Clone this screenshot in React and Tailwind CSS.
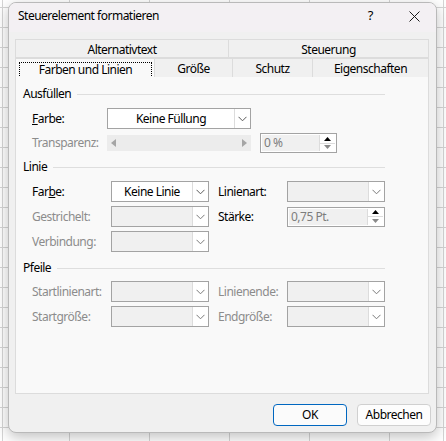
import React from "react";

const F = { fontFamily: '"Noto Sans", "Open Sans", sans-serif' };

function Chevron({ disabled }) {
  return (
    <svg width="9" height="6" viewBox="0 0 9 6" className="block">
      <path d="M0.5 0.8 L4.5 4.8 L8.5 0.8" fill="none" stroke={disabled ? "#7a7a7a" : "#5a5a5a"} strokeWidth="1" />
    </svg>
  );
}

function Combo({ text, disabled, w = "w-[98px]", center }) {
  return (
    <div className={`${w} h-[21px] border border-[#a3a3a3] flex ${disabled ? "bg-[#f0f0f0]" : "bg-white"}`}>
      <div className={`flex-1 flex items-center ${center ? "justify-center" : "pl-1"} text-[12px] text-black`}>{text}</div>
      <div className="w-[16px] h-full border-l border-[#dcdcdc] bg-white flex items-center justify-center">
        <Chevron disabled={disabled} />
      </div>
    </div>
  );
}

function Spin({ text, w }) {
  return (
    <div className={`${w} h-[20px] border border-[#a3a3a3] bg-white p-px flex`}>
      <div className="flex-1 bg-[#f0f0f0] flex items-center pl-[2px] text-[12px] text-[#7d7d7d]">{text}</div>
      <div className="w-[16px] flex flex-col border-l border-[#dcdcdc]">
        <div className="flex-1 flex items-center justify-center border-b border-[#dcdcdc]">
          <svg width="7" height="4" viewBox="0 0 7 4"><path d="M0 4 L3.5 0 L7 4 Z" fill="#000" /></svg>
        </div>
        <div className="flex-1 flex items-center justify-center">
          <svg width="7" height="4" viewBox="0 0 7 4"><path d="M0 0 L3.5 4 L7 0 Z" fill="#8a8a8a" /></svg>
        </div>
      </div>
    </div>
  );
}

function Section({ title, children }) {
  return (
    <div className="flex flex-col">
      <div className="flex items-center gap-[6px] w-[362px] h-[16px]">
        <span className="text-[12px] text-black leading-none">{title}</span>
        <div className="flex-1 h-px bg-[#dedede]" />
      </div>
      {children}
    </div>
  );
}

function Label({ children, disabled, w }) {
  return (
    <div className={`${w} text-[12px] leading-none whitespace-nowrap ${disabled ? "text-[#8c8c8c]" : "text-black"}`}>{children}</div>
  );
}

export default function App() {
  return (
    <div
      className="relative w-[446px] h-[441px] overflow-hidden tracking-[-0.5px] bg-white bg-[linear-gradient(to_right,#d5d5d5_1px,transparent_1px),linear-gradient(to_bottom,#d5d5d5_1px,transparent_1px)] bg-[size:80px_20px] bg-[position:69px_7px]"
      style={F}
    >
      <div className="absolute left-[2px] top-0 w-px h-full bg-[#d5d5d5]" />
      <div className="absolute left-[443px] top-0 w-px h-full bg-[#d5d5d5]" />
      <div className="absolute left-[8px] top-[2px] w-[429px] h-[431px] rounded-[8px] overflow-hidden border border-[#b9b9b9] shadow-[0_4px_14px_rgba(0,0,0,0.25)] bg-[#f0f0f0] flex flex-col">
        {/* title bar */}
        <div className="h-[29px] bg-[#f3f0f3] flex items-center pl-[9px] pb-[3px]">
          <span className="text-[12px] text-black">Steuerelement formatieren</span>
          <span className="ml-auto text-[13px] text-black mr-[36px]">?</span>
          <svg width="11" height="11" viewBox="0 0 11 11" className="mr-[16px]">
            <path d="M0.5 0.5 L10.5 10.5 M10.5 0.5 L0.5 10.5" stroke="#1a1a1a" strokeWidth="1" />
          </svg>
        </div>
        {/* body */}
        <div className="flex-1 flex flex-col pt-[7px] pl-[6px]">
          {/* tabs */}
          <div className="flex w-[414px] h-[19px]">
            <div className="w-[214px] border border-[#dcdcdc] bg-[#f0f0f0] flex items-center justify-center text-[12px] pt-[2px]">Alternativtext</div>
            <div className="flex-1 border border-l-0 border-[#dcdcdc] bg-[#f0f0f0] flex items-center justify-center text-[12px] pt-[2px]">Steuerung</div>
          </div>
          <div className="flex w-[414px] h-[19px]">
            <div className="w-[139px] bg-[#f9f9f9] border-l border-t border-[#dcdcdc] flex items-center pl-[3px] pt-[3px]">
              <div className="w-[133px] h-[16px] border border-dotted border-black flex items-center justify-center text-[12px]">Farben und Linien</div>
            </div>
            <div className="w-[79px] border border-b-0 border-[#dcdcdc] bg-[#f0f0f0] flex items-center justify-center text-[12px] pt-[2px]">Größe</div>
            <div className="w-[80px] border-t border-r border-[#dcdcdc] bg-[#f0f0f0] flex items-center justify-center text-[12px] pt-[2px]">Schutz</div>
            <div className="flex-1 border-t border-r border-[#dcdcdc] bg-[#f0f0f0] flex items-center justify-center text-[12px] pt-[2px]">Eigenschaften</div>
          </div>
          {/* panel */}
          <div className="w-[414px] h-[317px] bg-[#f9f9f9] border border-t-0 border-[#dcdcdc] pl-[7px] pt-[9px] flex flex-col">
            <Section title="Ausfüllen">
              <div className="flex flex-col pl-[9px] pt-[6px] gap-[4px]">
                <div className="flex items-center">
                  <Label w="w-[75px]"><span className="underline">F</span>arbe:</Label>
                  <Combo text="Keine Füllung" w="w-[144px]" center />
                </div>
                <div className="flex items-center">
                  <Label w="w-[75px]" disabled>Transparenz:</Label>
                  <div className="w-[144px] h-[16px] bg-[#ececec] flex items-center justify-between px-[4px]">
                    <svg width="5" height="8" viewBox="0 0 5 8"><path d="M5 0 L0 4 L5 8 Z" fill="#a5a5a5" /></svg>
                    <svg width="5" height="8" viewBox="0 0 5 8"><path d="M0 0 L5 4 L0 8 Z" fill="#a5a5a5" /></svg>
                  </div>
                  <div className="ml-[9px]"><Spin text="0 %" w="w-[77px]" /></div>
                </div>
              </div>
            </Section>
            <div className="h-[6px]" />
            <Section title="Linie">
              <div className="flex flex-col pl-[9px] pt-[6px] gap-[4px]">
                <div className="flex items-center">
                  <Label w="w-[79px]">Far<span className="underline">b</span>e:</Label>
                  <Combo text="Keine Linie" center />
                  <Label w="w-[69px] ml-[9px]">Linienart:</Label>
                  <Combo disabled />
                </div>
                <div className="flex items-center">
                  <Label w="w-[79px]" disabled>Gestrichelt:</Label>
                  <Combo disabled />
                  <Label w="w-[69px] ml-[9px]">Stärke:</Label>
                  <Spin text="0,75 Pt." w="w-[98px]" />
                </div>
                <div className="flex items-center">
                  <Label w="w-[79px]" disabled>Verbindung:</Label>
                  <Combo disabled />
                </div>
              </div>
            </Section>
            <div className="h-[8px]" />
            <Section title="Pfeile">
              <div className="flex flex-col pl-[9px] pt-[5px] gap-[4px]">
                <div className="flex items-center">
                  <Label w="w-[79px]" disabled>Startlinienart:</Label>
                  <Combo disabled />
                  <Label w="w-[69px] ml-[9px]" disabled>Linienende:</Label>
                  <Combo disabled />
                </div>
                <div className="flex items-center">
                  <Label w="w-[79px]" disabled>Startgröße:</Label>
                  <Combo disabled />
                  <Label w="w-[69px] ml-[9px]" disabled>Endgröße:</Label>
                  <Combo disabled />
                </div>
              </div>
            </Section>
          </div>
          {/* buttons */}
          <div className="flex justify-end gap-[10px] pr-[5px] pt-[10px]">
            <button className="w-[74px] h-[22px] rounded-[4px] border border-[#0067c0] bg-[#fbfbfb] text-[12px] text-black flex items-center justify-center">OK</button>
            <button className="w-[74px] h-[22px] rounded-[4px] border border-[#d0d0d0] bg-[#fdfdfd] text-[12px] text-black flex items-center justify-center">Abbrechen</button>
          </div>
        </div>
      </div>
    </div>
  );
}
